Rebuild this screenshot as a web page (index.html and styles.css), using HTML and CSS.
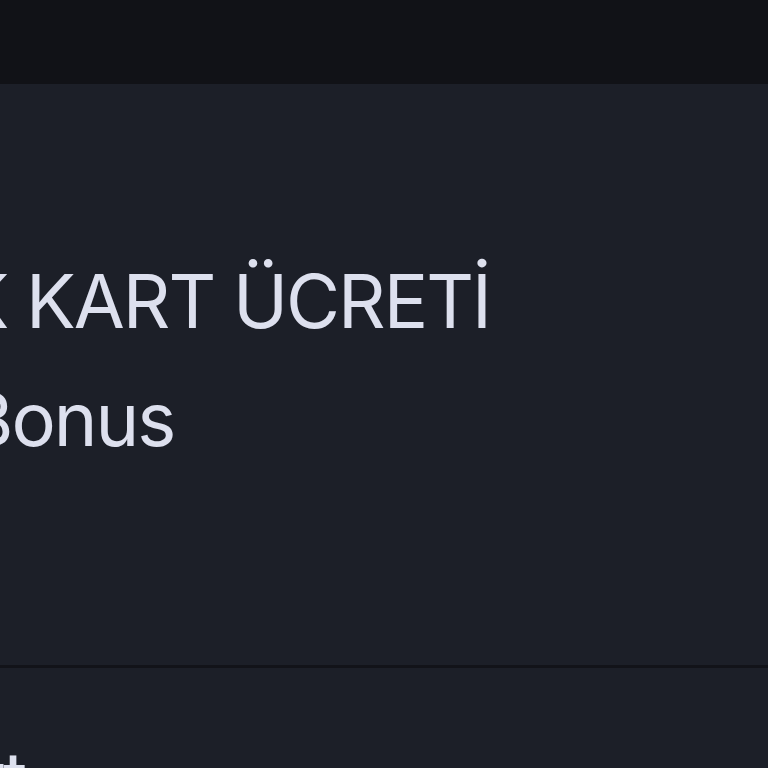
FILE: index.html
```html
<!DOCTYPE html>
<html lang="tr">
<head>
<meta charset="utf-8">
<link rel="stylesheet" href="styles.css">
</head>
<body>
<header class="topbar"></header>
<section class="panel">
  <div class="line line-first"><span class="pre">YILLIK&nbsp;</span>KART ÜCRETİ</div>
  <div class="line line-second">Bonus</div>
</section>
<section class="panel-next">
  <div class="line line-third"><span class="pre">Kar</span>t</div>
</section>
</body>
</html>
```
FILE: styles.css
```css
html, body {
  margin: 0;
  padding: 0;
  background: #1c1f28;
  overflow: hidden;
}
body {
  width: 768px;
  height: 768px;
  font-family: Inter, "Noto Sans", sans-serif;
  color: #dde0ee;
}
.topbar {
  height: 84px;
  background: #111217;
}
.panel {
  height: 584px;
  padding-top: 158px;
  box-sizing: border-box;
  border-bottom: 3px solid #121319;
  background: #1c1f28;
}
.line {
  font-size: 74px;
  line-height: 118px;
  letter-spacing: -2px;
  white-space: nowrap;
  font-weight: 400;
}
.pre {
  display: inline-flex;
  width: 0;
  justify-content: flex-end;
  white-space: nowrap;
}
.line-first {
  padding-left: 26px;
}
.line-second {
  margin-left: -35px;
}
.panel-next {
  padding-top: 51px;
}
.line-third {
  padding-left: 3px;
}
```
